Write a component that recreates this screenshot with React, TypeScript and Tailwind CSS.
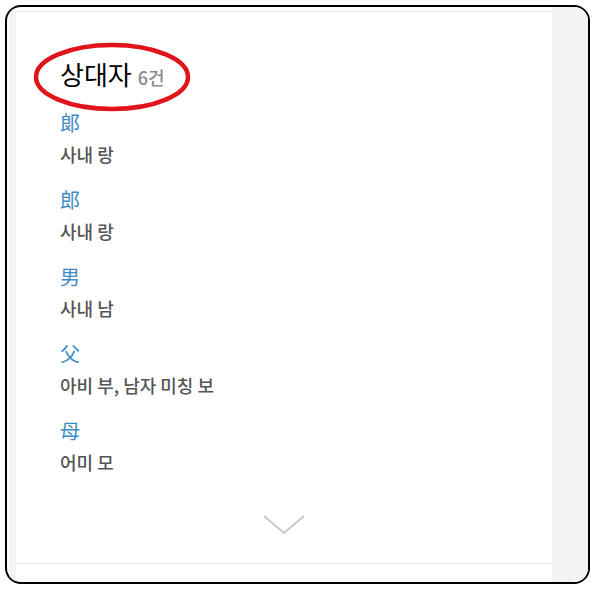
const entries = [
  { hanja: "郞", meaning: "사내 랑" },
  { hanja: "郎", meaning: "사내 랑" },
  { hanja: "男", meaning: "사내 남" },
  { hanja: "父", meaning: "아비 부, 남자 미칭 보" },
  { hanja: "母", meaning: "어미 모" },
];

const font = { fontFamily: '"Noto Sans CJK KR", "Noto Sans", sans-serif' };

export default function App() {
  return (
    <div className="w-[595px] h-[589px] bg-white pt-[5px] pl-[5px]" style={font}>
      <div className="w-[585px] h-[579px] border-2 border-black rounded-[16px] overflow-hidden flex bg-white">
        {/* left gutter */}
        <div className="w-[9px] pl-[2px]">
          <div className="h-full bg-[#f3f4f6]" />
        </div>

        {/* main card */}
        <div className="w-[536px] pt-[4px] flex flex-col">
          <div className="relative h-[553px] border-t border-b border-[#ececec] pl-[44px] pt-[45px]">
            <svg
              className="absolute left-[16px] top-[28px]"
              width="162"
              height="74"
              viewBox="0 0 162 74"
            >
              <ellipse cx="80" cy="37" rx="76" ry="32" fill="none" stroke="#e1141b" strokeWidth="4.5" />
            </svg>

            <h2 className="relative flex items-baseline gap-[6px] h-[34px]">
              <span className="text-[26px] leading-[34px] font-normal text-black">상대자</span>
              <span className="text-[18px] font-medium text-[#8a8a8a]">6건</span>
            </h2>

            <ul className="mt-[18px]">
              {entries.map((e, i) => (
                <li key={i} className="h-[77px]">
                  <div className="text-[20px] leading-[28px] text-[#3f8cc4]">{e.hanja}</div>
                  <div className="mt-[4px] text-[18px] leading-[26px] font-medium text-[#555]">
                    {e.meaning}
                  </div>
                </li>
              ))}
            </ul>

            <div className="flex justify-center pr-[44px] mt-[20px]">
              <svg width="44" height="22" viewBox="0 0 44 22">
                <path d="M2 2 L22 19 L42 2" fill="none" stroke="#c8c8c8" strokeWidth="2" />
              </svg>
            </div>
          </div>
        </div>

        {/* right gutter */}
        <div className="flex-1 bg-[#f3f4f6]" />
      </div>
    </div>
  );
}
